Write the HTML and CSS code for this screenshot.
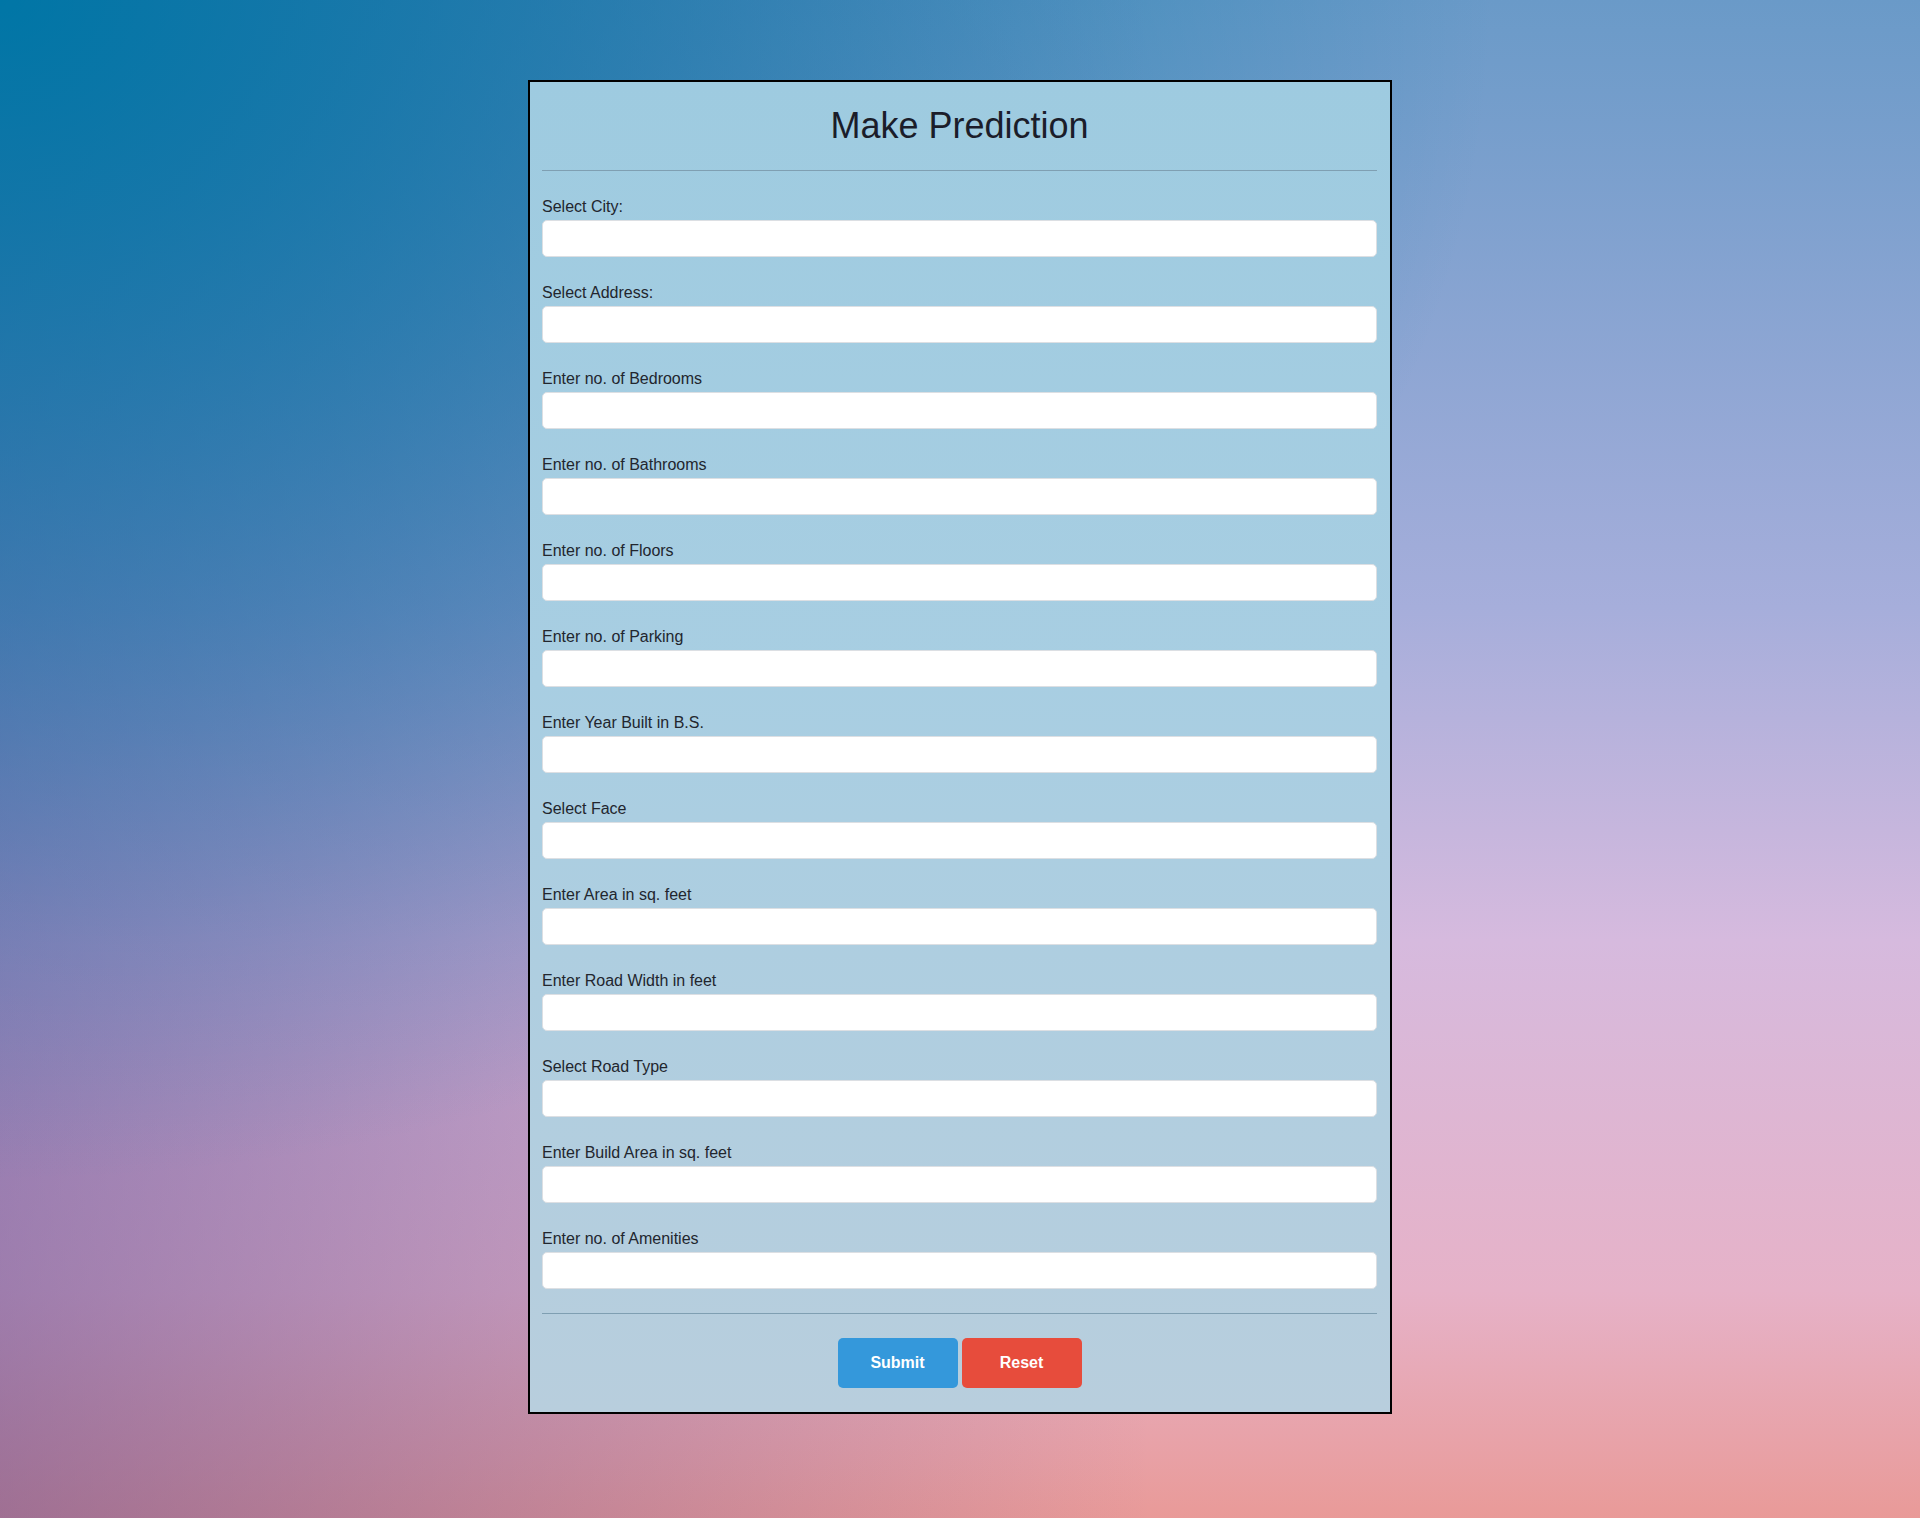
FILE: index.html
```html
<!DOCTYPE html>
<html lang="en">
<head>
<meta charset="utf-8">
<title>Make Prediction</title>
<link rel="stylesheet" href="styles.css">
</head>
<body>
<form class="card">
  <h1 class="title">Make Prediction</h1>
  <hr class="rule rule-top">
  <div class="fields">
    <div class="field"><label class="label">Select City:</label><input class="input" type="text"></div>
    <div class="field"><label class="label">Select Address:</label><input class="input" type="text"></div>
    <div class="field"><label class="label">Enter no. of Bedrooms</label><input class="input" type="text"></div>
    <div class="field"><label class="label">Enter no. of Bathrooms</label><input class="input" type="text"></div>
    <div class="field"><label class="label">Enter no. of Floors</label><input class="input" type="text"></div>
    <div class="field"><label class="label">Enter no. of Parking</label><input class="input" type="text"></div>
    <div class="field"><label class="label">Enter Year Built in B.S.</label><input class="input" type="text"></div>
    <div class="field"><label class="label">Select Face</label><input class="input" type="text"></div>
    <div class="field"><label class="label">Enter Area in sq. feet</label><input class="input" type="text"></div>
    <div class="field"><label class="label">Enter Road Width in feet</label><input class="input" type="text"></div>
    <div class="field"><label class="label">Select Road Type</label><input class="input" type="text"></div>
    <div class="field"><label class="label">Enter Build Area in sq. feet</label><input class="input" type="text"></div>
    <div class="field"><label class="label">Enter no. of Amenities</label><input class="input" type="text"></div>
  </div>
  <hr class="rule rule-bottom">
  <div class="actions">
    <button class="btn btn-submit" type="button">Submit</button>
    <button class="btn btn-reset" type="button">Reset</button>
  </div>
</form>
</body>
</html>
```

FILE: styles.css
```css
html, body {
  margin: 0;
  padding: 0;
}

body {
  min-height: 1518px;
  font-family: "Liberation Sans", Arial, sans-serif;
  background:
    radial-gradient(ellipse at 0 0, rgba(0, 118, 166, 1) 0%, rgba(0, 118, 166, 0) 55%),
    linear-gradient(to right, rgba(70, 60, 140, 0.45) 0%, rgba(70, 60, 140, 0) 60%),
    linear-gradient(to bottom, #6a9ac8 0%, #a6aedb 40%, #d6bade 62%, #e6b2c8 85%, #e99a98 100%);
  background-repeat: no-repeat;
  background-size: 1920px 1518px;
  overflow: hidden;
}

.card {
  box-sizing: border-box;
  width: 864px;
  margin: 80px auto 0;
  border: 2px solid #000;
  padding: 23px 13px 24px 12px;
  background: linear-gradient(to bottom, #9ecbe0 0%, #a8cee2 45%, #b8cedd 100%);
  display: flex;
  flex-direction: column;
}

.title {
  margin: 0;
  font-size: 36px;
  line-height: 42px;
  font-weight: normal;
  color: #1b1d2a;
  text-align: center;
}

.rule {
  margin: 0;
  border: 0;
  height: 1px;
  background: #7f9fb2;
}

.rule-top {
  margin-top: 23px;
}

.fields {
  display: flex;
  flex-direction: column;
  gap: 27px;
  margin-top: 27px;
}

.field {
  display: flex;
  flex-direction: column;
}

.label {
  font-size: 16px;
  line-height: 18px;
  color: #22262e;
  margin-bottom: 4px;
}

.input {
  box-sizing: border-box;
  height: 37px;
  width: 100%;
  margin: 0;
  background: #fff;
  border: 1px solid #dcdfe3;
  border-radius: 5px;
  font-size: 16px;
  font-family: "Liberation Sans", Arial, sans-serif;
}

.rule-bottom {
  margin-top: 24px;
}

.actions {
  display: flex;
  justify-content: center;
  gap: 4px;
  margin-top: 24px;
}

.btn {
  width: 120px;
  height: 50px;
  border: 0;
  border-radius: 5px;
  color: #fff;
  font-family: "Liberation Sans", Arial, sans-serif;
  font-size: 16px;
  font-weight: bold;
  padding: 0;
}

.btn-submit {
  background: #3498db;
}

.btn-reset {
  background: #e74c3c;
}
```
